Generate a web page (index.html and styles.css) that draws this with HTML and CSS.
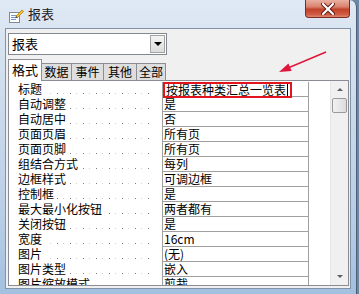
FILE: index.html
```html
<!DOCTYPE html>
<html lang="zh-CN">
<head>
    <meta charset="UTF-8">
    <meta name="viewport" content="width=device-width, initial-scale=1.0">
    <title>报表</title>
    <link rel="stylesheet" href="styles.css">
</head>
<body>

    <div class="window">
        <div class="titlebar">
            <svg class="app-icon" width="16" height="16" viewBox="0 0 16 16">
                <rect x="1.5" y="4.5" width="10" height="10" fill="#fff" stroke="#7d8a99"/>
                <rect x="3" y="7" width="7" height="1" fill="#6f9ccc"/>
                <rect x="3" y="9" width="7" height="1" fill="#6f9ccc"/>
                <rect x="3" y="11" width="5" height="1" fill="#6f9ccc"/>
                <path d="M8 8 L14 2 L15.5 3.5 L9.5 9.5 Z" fill="#f2c230" stroke="#b07a10" stroke-width="0.8"/>
                <path d="M8 8 L7.2 10.3 L9.5 9.5 Z" fill="#5a4a30"/>
            </svg>
            <span class="title">报表</span>
            <div class="close-btn">
                <svg width="14" height="12" viewBox="0 0 14 12">
                    <path d="M2 1 L12 11 M12 1 L2 11" stroke="#5a1a12" stroke-width="4" stroke-linecap="round"/>
                    <path d="M2 1 L12 11 M12 1 L2 11" stroke="#fff" stroke-width="2.2" stroke-linecap="round"/>
                </svg>
            </div>
        </div>

        <div class="client">
            <div class="combo">
                <span class="combo-text">报表</span>
                <div class="drop-btn"><span class="tri-down"></span></div>
            </div>

            <div class="tabs">
                <div class="tab active">格式</div>
                <div class="tab">数据</div>
                <div class="tab">事件</div>
                <div class="tab">其他</div>
                <div class="tab">全部</div>
            </div>

            <div class="panel">
                <div class="props" id="props"></div>
                <div class="scrollbar">
                    <div class="sb-btn"><span class="sb-up"></span></div>
                    <div class="sb-thumb"></div>
                    <div class="sb-track"></div>
                    <div class="sb-btn"><span class="sb-down"></span></div>
                </div>
            </div>
        </div>

        <svg class="arrow" width="359" height="294" viewBox="0 0 359 294">
            <line x1="326" y1="52" x2="288" y2="68" stroke="#e0163c" stroke-width="1.4"/>
            <polygon points="279,72 291.6,71 288.4,63.6" fill="#e0163c"/>
        </svg>
    </div>

    <script>
        let rows = [
            ["标题", "按报表种类汇总一览表"],
            ["自动调整", "是"],
            ["自动居中", "否"],
            ["页面页眉", "所有页"],
            ["页面页脚", "所有页"],
            ["组结合方式", "每列"],
            ["边框样式", "可调边框"],
            ["控制框", "是"],
            ["最大最小化按钮", "两者都有"],
            ["关闭按钮", "是"],
            ["宽度", "16cm"],
            ["图片", "(无)"],
            ["图片类型", "嵌入"],
            ["图片缩放模式", "剪裁"]
        ];

        let html = "";
        rows.forEach((r, i) => {
            let value = r[1];
            if (i === 0) {
                value = `<span class="hl">${value}<span class="caret"></span></span>`;
            }
            html += `<div class="row"><div class="label"><span>${r[0]}</span></div><div class="value">${value}</div></div>`;
        });
        document.getElementById("props").innerHTML = html;
    </script>

</body>
</html>
```

FILE: styles.css
```css
body {
    margin: 0;
    width: 359px;
    height: 294px;
    overflow: hidden;
    background: #6e87a3;
    font-family: "Noto Sans CJK SC", "Liberation Sans", sans-serif;
    font-size: 12px;
    color: #000;
}
.window {
    position: relative;
    box-sizing: border-box;
    width: 357px;
    height: 294px;
    border-right: 1px solid #4b5e76;
    border-top-right-radius: 7px;
    background: linear-gradient(to bottom, #dfe9f4 0%, #cfdded 30%, #b7cde6 75%, #a3c0e0 100%);
}
.titlebar {
    height: 28px;
    display: flex;
    align-items: flex-start;
    padding-left: 8px;
}
.app-icon {
    margin-top: 8px;
}
.title {
    margin-left: 4px;
    margin-top: 6px;
    font-size: 13px;
    line-height: 16px;
    color: #1b1b1b;
}
.close-btn {
    margin-left: auto;
    margin-right: 6px;
    width: 45px;
    height: 18px;
    box-sizing: border-box;
    border: 1px solid #7a2c22;
    border-top: none;
    border-radius: 0 0 4px 4px;
    background: linear-gradient(to bottom, #eab0a2 0%, #d9826e 40%, #c2412b 55%, #cf5c44 85%, #e08a70 100%);
    display: flex;
    align-items: center;
    justify-content: center;
}

/* client area */
.client {
    margin-left: 5px;
    width: 346px;
    box-sizing: border-box;
    border: 1px solid #8393a7;
    background: #f0f0f0;
    padding: 4px 1px 2px 2px;
}
.combo {
    width: 159px;
    height: 22px;
    box-sizing: border-box;
    border: 1px solid #828790;
    background: #fff;
    display: flex;
    align-items: center;
}
.combo-text {
    margin-left: 3px;
    font-size: 13px;
    line-height: 14px;
}
.drop-btn {
    margin-left: auto;
    margin-right: 1px;
    width: 15px;
    height: 18px;
    box-sizing: border-box;
    border: 1px solid #a3a3a3;
    background: linear-gradient(to bottom, #f4f4f4, #dcdcdc);
    display: flex;
    align-items: center;
    justify-content: center;
}
.tri-down {
    width: 0;
    height: 0;
    border-left: 4px solid transparent;
    border-right: 4px solid transparent;
    border-top: 4px solid #000;
}

/* tabs */
.tabs {
    margin-top: 4px;
    height: 21px;
    display: flex;
    align-items: flex-end;
}
.tab {
    height: 17px;
    box-sizing: border-box;
    border: 1px solid #8c8e94;
    border-bottom: none;
    border-left: none;
    background: #dedede;
    padding: 0 2px;
    font-size: 12px;
    line-height: 16px;
    text-align: center;
}
.tab:nth-child(2) { width: 30px; }
.tab:nth-child(3) { width: 32px; }
.tab:nth-child(4) { width: 33px; }
.tab:nth-child(5) { width: 29px; }
.tab.active {
    position: relative;
    z-index: 1;
    width: 34px;
    height: 22px;
    margin-bottom: -1px;
    border-left: 1px solid #8c8e94;
    background: #fff;
    font-size: 13px;
    line-height: 20px;
}

/* property sheet */
.panel {
    height: 206px;
    box-sizing: border-box;
    border: 1px solid #898c95;
    background: #fff;
    display: flex;
    overflow: hidden;
}
.props {
    width: 300px;
    padding-top: 1px;
}
.row {
    display: flex;
    height: 15px;
}
.label {
    width: 153px;
    box-sizing: border-box;
    padding-left: 9px;
    padding-right: 8px;
    line-height: 14px;
    white-space: nowrap;
    background-image:
        linear-gradient(to right, #7b7b7b 1px, transparent 1px),
        linear-gradient(to right, #d2d2d2 1px, transparent 1px);
    background-size: 13px 1px, 13px 1px;
    background-repeat: repeat-x;
    background-position: 9px 11px, 15px 11px;
    background-clip: content-box;
}
.label span {
    background: #fff;
    padding-right: 3px;
}
.value {
    position: relative;
    width: 147px;
    box-sizing: border-box;
    border-left: 1px solid #a0a0a0;
    border-right: 1px solid #a0a0a0;
    border-bottom: 1px solid #a0a0a0;
    padding-left: 1px;
    line-height: 14px;
    white-space: nowrap;
}
.hl {
    position: absolute;
    top: 0;
    left: 0;
    height: 16px;
    box-sizing: border-box;
    border: 2px solid #e3141c;
    padding: 0 2px 0 1px;
    line-height: 12px;
    background: #fff;
    display: flex;
    align-items: center;
}
.caret {
    display: inline-block;
    width: 1px;
    height: 12px;
    margin-left: 1px;
    background: #000;
}

/* scrollbar */
.scrollbar {
    margin-left: auto;
    width: 17px;
    display: flex;
    flex-direction: column;
    background: #f0f0f0;
    border-left: 1px solid #e6e6e6;
}
.sb-btn {
    height: 17px;
    display: flex;
    align-items: center;
    justify-content: center;
}
.sb-up, .sb-down {
    width: 0;
    height: 0;
    border-left: 3px solid transparent;
    border-right: 3px solid transparent;
}
.sb-up {
    border-bottom: 3px solid #606060;
}
.sb-down {
    border-top: 3px solid #606060;
}
.sb-thumb {
    height: 15px;
    margin: 0 1px;
    box-sizing: border-box;
    border: 1px solid #9a9a9a;
    border-radius: 2px;
    background: linear-gradient(to right, #f2f2f2, #dcdcdc);
}
.sb-track {
    flex: 1;
}
.arrow {
    position: absolute;
    top: 0;
    left: 0;
    pointer-events: none;
}
```
